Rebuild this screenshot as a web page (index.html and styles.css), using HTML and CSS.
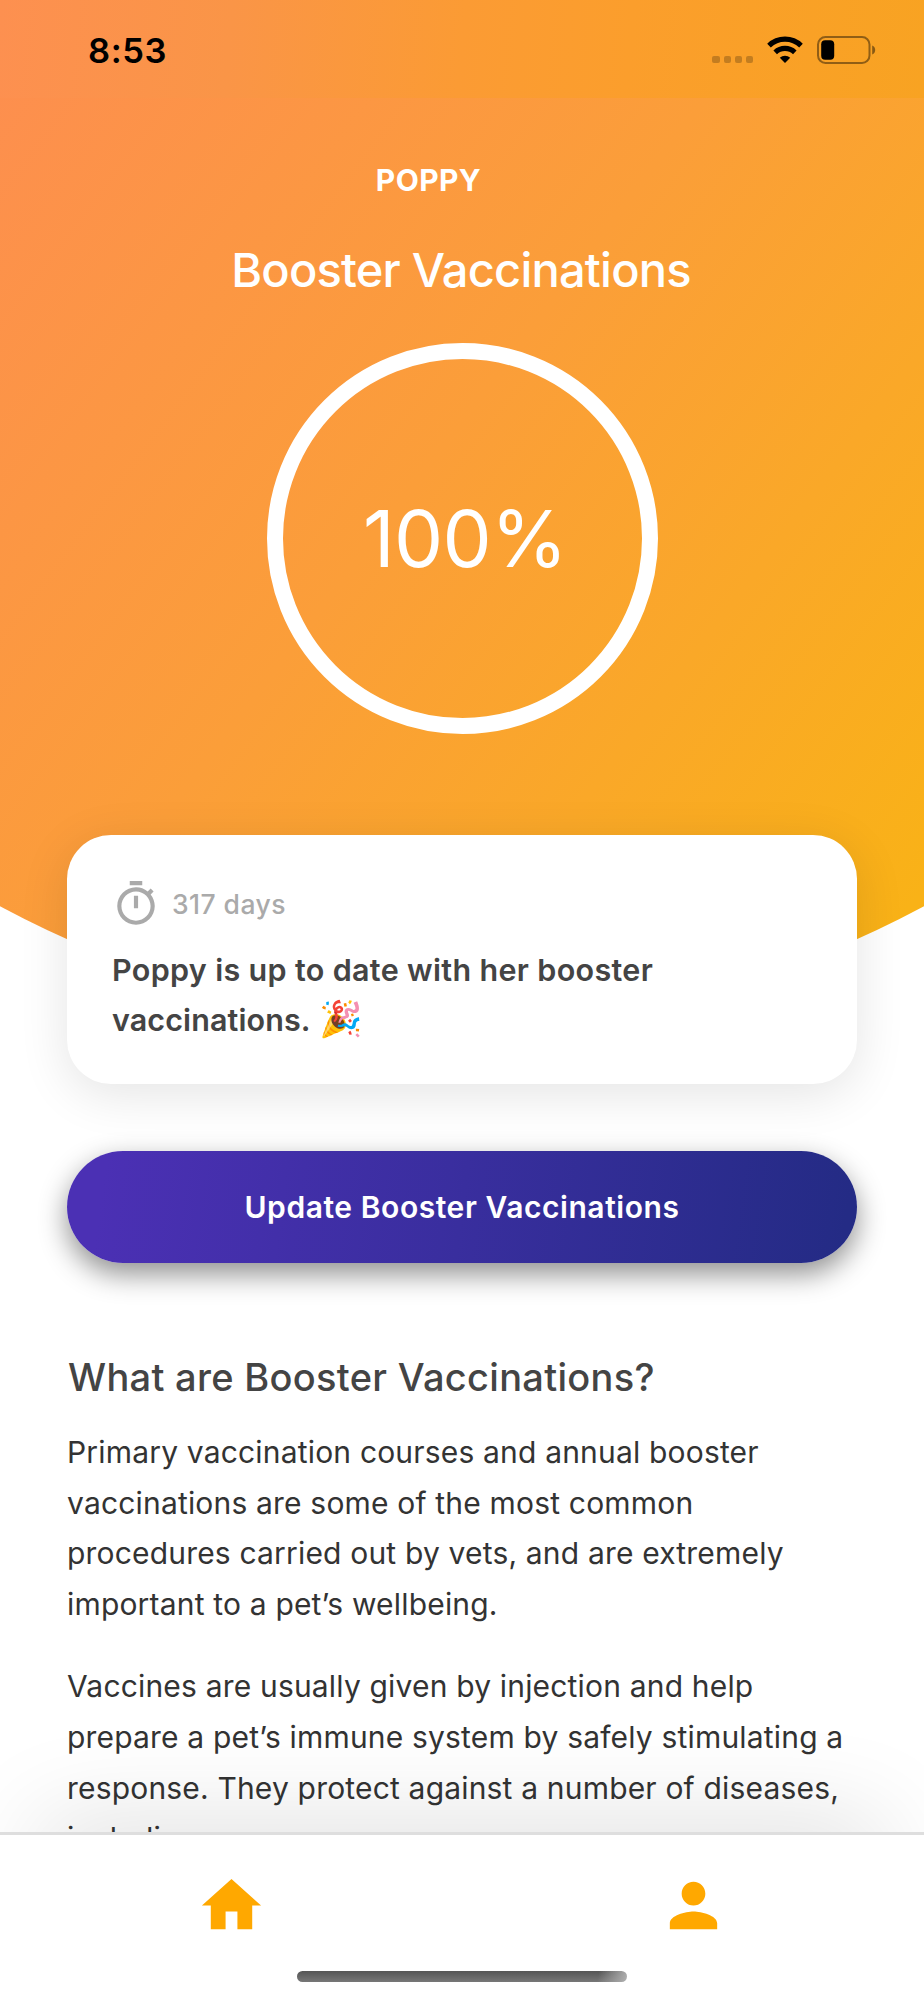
FILE: index.html
```html
<!DOCTYPE html>
<html lang="en">
<head>
<meta charset="utf-8">
<title>Booster Vaccinations</title>
<link rel="stylesheet" href="styles.css">
</head>
<body>
<div class="phone">
  <main class="screen">
    <header class="hero">
      <div class="status">
        <span class="time">8:53</span>
        <div class="indicators">
          <div class="signal"><i></i><i></i><i></i><i></i></div>
          <svg class="wifi" viewBox="0 0 36 27" width="36" height="27">
            <g fill="none" stroke="#000" stroke-width="5.2">
              <path d="M2 9.6A23.2 23.2 0 0 1 34 9.6"/>
              <path d="M8.2 16.3A14.4 14.4 0 0 1 27.8 16.3"/>
            </g>
            <path d="M18 27l-5.200-5.200A7.800 7.800 0 0 1 23.200 21.800z"/>
          </svg>
          <svg class="battery" viewBox="0 0 60 28" width="60" height="28">
            <rect x="1" y="1" width="51.500" height="26" rx="7.500" fill="none" stroke="#000" stroke-opacity=".42" stroke-width="2"/>
            <rect x="4.200" y="4.300" width="13" height="19.400" rx="4"/>
            <path d="M55.200 9.500c4 1.600 4 7.400 0 9z" fill-opacity=".45"/>
          </svg>
        </div>
      </div>
      <div class="pet">POPPY</div>
      <h1 class="title">Booster Vaccinations</h1>
      <div class="ring"><span>100%</span></div>
    </header>

    <section class="card">
      <div class="due">
        <svg viewBox="0 0 24 24" width="50" height="50" fill="#aaa">
          <path d="M15 1H9v2h6V1zm-4 13h2V8h-2v6zm8.030-6.610l1.420-1.420c-.430-.510-.900-.990-1.410-1.410l-1.420 1.420C16.070 4.740 14.120 4 12 4c-4.970 0-9 4.030-9 9s4.020 9 9 9 9-4.030 9-9c0-2.120-.740-4.070-1.970-5.610zM12 20c-3.870 0-7-3.130-7-7s3.130-7 7-7 7 3.130 7 7-3.130 7-7 7z"/>
        </svg>
        <span>317 days</span>
      </div>
      <p class="message">Poppy is up to date with her booster<br><span class="tight">vaccinations.</span><span class="emoji">🎉</span></p>
    </section>

    <button class="cta">Update Booster Vaccinations</button>

    <article class="info">
      <h2>What are Booster Vaccinations?</h2>
      <p>Primary vaccination courses and annual booster<br>vaccinations are some of the most common<br>procedures carried out by vets, and are extremely<br>important to a pet’s wellbeing.</p>
      <p>Vaccines are usually given by injection and help<br>prepare a pet’s immune system by safely stimulating a<br>response. They protect against a number of diseases,<br>including</p>
    </article>
  </main>

  <nav class="tabs">
    <a class="tab"><svg viewBox="0 0 24 24" width="71" height="71"><path d="M10 20v-6h4v6h5v-8h3L12 3 2 12h3v8z"/></svg></a>
    <a class="tab"><svg viewBox="0 0 24 24" width="71" height="71"><path d="M12 12c2.210 0 4-1.790 4-4s-1.790-4-4-4-4 1.790-4 4 1.790 4 4 4zm0 2c-2.670 0-8 1.340-8 4v2h16v-2c0-2.660-5.330-4-8-4z"/></svg></a>
    <div class="home-bar"></div>
  </nav>
</div>
</body>
</html>
```
FILE: styles.css
```css
* { box-sizing: border-box; margin: 0; padding: 0; }

body {
  width: 924px;
  background: #fff;
  font-family: Inter, "Liberation Sans", sans-serif;
  -webkit-font-smoothing: antialiased;
}

.phone {
  display: flex;
  flex-direction: column;
  width: 924px;
  height: 2000px;
  overflow: hidden;
}

.screen {
  flex: 0 0 1832px;
  display: flex;
  flex-direction: column;
  overflow: hidden;
  background: #fff;
}

/* Orange hero with a curved lower edge */
.hero {
  flex: none;
  display: flex;
  flex-direction: column;
  align-items: center;
  height: 1024px;
  margin-bottom: -189px;
  color: #fff;
  background: linear-gradient(127deg, #fd8f4e 4%, #fb9e39 46%, #f9b217 94%);
  clip-path: circle(972px at 462px 51px);
}

.status {
  flex: none;
  display: flex;
  justify-content: space-between;
  align-self: stretch;
  height: 98px;
  padding: 30px 47px 0 88px;
  color: #000;
  background: linear-gradient(95deg, #fd9050 0%, #fa9547 25%, #fb9b34 50%, #fb9e2c 68%, #f8a322 100%);
}

.time {
  font-size: 34.500px;
  font-weight: 600;
  line-height: 42px;
  letter-spacing: .600px;
}

.indicators {
  display: flex;
  align-items: flex-end;
  height: 34px;
}

.signal { display: flex; gap: 3.800px; margin-right: 14px; padding-bottom: 1px; }
.signal i { width: 7.300px; height: 7.300px; border-radius: 2px; background: rgba(0, 0, 0, .22); }
.wifi { margin-right: 14px; margin-bottom: 1px; }

.pet {
  margin-top: 62px;
  padding-right: 67px;
  font-size: 30px;
  font-weight: 700;
  line-height: 40px;
  letter-spacing: .400px;
}

.title {
  margin-top: 40px;
  padding-right: 2px;
  font-size: 47px;
  font-weight: 500;
  line-height: 60px;
  letter-spacing: -.780px;
}

.ring {
  display: flex;
  align-items: center;
  justify-content: center;
  width: 391px;
  height: 391px;
  margin-top: 43px;
  padding-left: 6px;
  border: 16px solid #fff;
  border-radius: 50%;
  font-size: 78px;
  font-weight: 400;
  letter-spacing: -.700px;
}

.card {
  position: relative;
  flex: none;
  height: 249px;
  margin: 0 67px;
  padding: 44px 45px 0;
  border-radius: 44px;
  background: #fff;
  box-shadow: 0 10px 50px rgba(0, 0, 0, .110);
}

.due {
  display: flex;
  align-items: center;
  gap: 11px;
  height: 50px;
  margin-left: -1px;
  color: #aaa;
  font-size: 26.500px;
  font-weight: 500;
  letter-spacing: .450px;
}

.message {
  margin-top: 15.500px;
  color: #444;
  font-size: 30.500px;
  font-weight: 600;
  line-height: 50.600px;
  letter-spacing: .330px;
  white-space: nowrap;
}
.tight { letter-spacing: .100px; }

.emoji {
  margin-left: 8px;
  font-size: 35px;
  line-height: 0;
  letter-spacing: 0;
}

.cta {
  position: relative;
  flex: none;
  height: 112px;
  margin: 67px 67px 0;
  border: 0;
  border-radius: 56px;
  color: #fff;
  background: linear-gradient(98deg, #4b30b4 5%, #392e9e 50%, #242b85 98%);
  box-shadow: 0 11px 28px rgba(0, 0, 0, .440);
  font: 600 30px Inter, "Liberation Sans", sans-serif;
  letter-spacing: .560px;
}

.info {
  flex: none;
  margin: 89px 67px 0;
  color: #333;
  font-size: 30px;
  line-height: 50.600px;
  letter-spacing: .180px;
  white-space: nowrap;
}

.info h2 {
  margin-bottom: 25px;
  padding-left: 1px;
  color: #444;
  font-size: 38px;
  font-weight: 500;
  line-height: 50px;
  letter-spacing: .300px;
}

.info p + p { margin-top: 32px; }

/* Bottom tab bar */
.tabs {
  position: relative;
  flex: 0 0 168px;
  display: grid;
  grid-template-columns: 1fr 1fr;
  grid-template-rows: 136px 11px;
  justify-items: center;
  border-top: 3px solid #dedede;
  background: #fff;
  box-shadow: 0 -50px 100px -40px rgba(0, 0, 0, .130);
}

.tab { height: 71px; margin-top: 35px; }
.tab svg { display: block; fill: #ffa800; }

.home-bar {
  grid-column: 1 / 3;
  width: 330px;
  height: 11px;
  border-radius: 6px;
  background:
    linear-gradient(100deg, rgba(176, 176, 176, 0) 91%, #b0b0b0 100%),
    linear-gradient(#555, #777);
}
```
